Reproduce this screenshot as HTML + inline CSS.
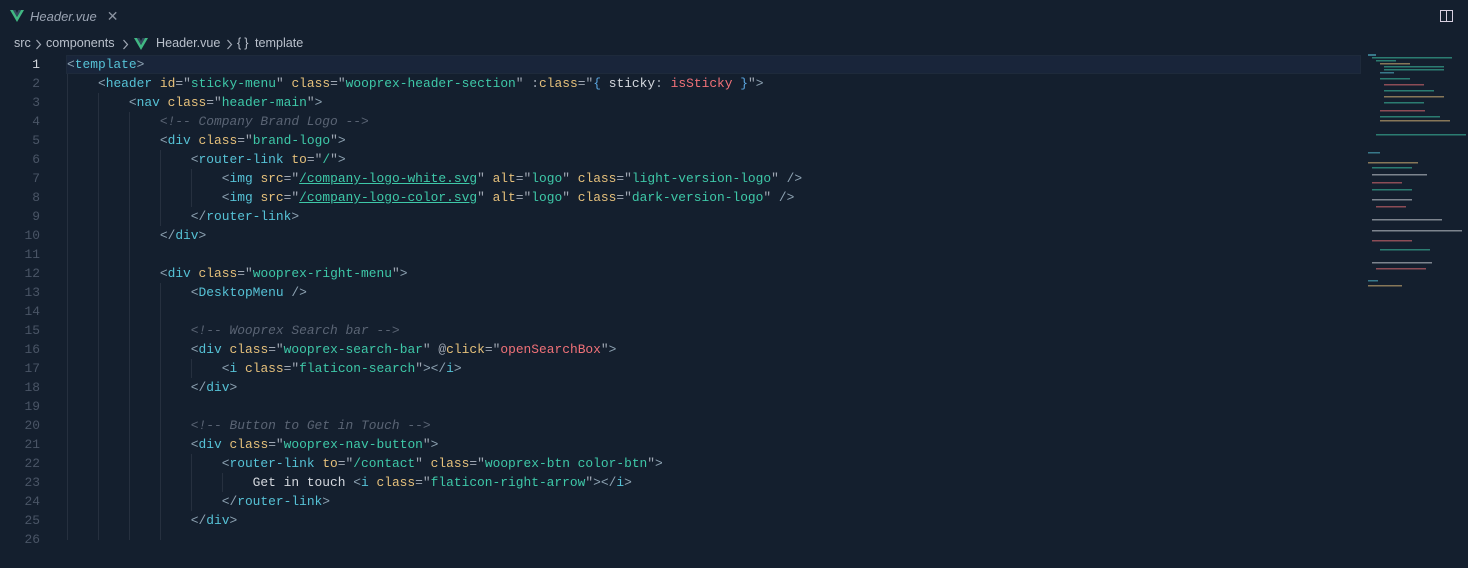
<!DOCTYPE html>
<html><head><meta charset="utf-8"><style>
*{margin:0;padding:0;box-sizing:border-box}
body{width:1468px;height:540px;overflow:hidden;background:#141f2e;font-family:"Liberation Sans",sans-serif;position:relative}
.tab{position:absolute;left:10px;top:6px;height:20px;display:flex;align-items:center;color:#9aa3b2;font-size:13px;font-style:italic}
.tab .x{font-style:normal;color:#8b93a0;margin-left:10px;font-size:14px}
.bc{position:absolute;top:36px;color:#b9c0cb;font-size:12.6px;white-space:pre}
.code{position:absolute;left:0;top:55px;font-family:"Liberation Mono",monospace;font-size:12.9px;line-height:19px;white-space:pre}
.ln{position:absolute;left:0;width:40px;text-align:right;color:#4a5566}
.ln.c{color:#d4d8de}
.tx{position:absolute;left:67px;color:#d4d8de}
.hl{position:absolute;left:66px;top:55px;width:1295px;height:19px;background:#19253a;border:1px solid #1e2a3b}
.g{position:absolute;width:1px;background:#26303f}
.b{color:#8ea3b3}.t{color:#56c2d6}.a{color:#e5c07b}.s{color:#3ec8a8}.q{color:#a0a8b4}.cm{color:#5a6474;font-style:italic}.p{color:#f07178}.u{text-decoration:underline;color:#3ec8a8}.w{color:#d4d8de}.br{color:#5aa6e0}
</style></head><body>
<div class="tab"><svg width="14" height="12" viewBox="0 0 14 12"><path d="M0 0h3l4 7 4-7h3L7 12z" fill="#41b883"/><path d="M3 0h2.5L7 3 8.5 0H11L7 7z" fill="#34495e"/></svg><span style="margin-left:6px">Header.vue</span><span class="x">✕</span></div>
<svg style="position:absolute;left:1440px;top:10px" width="13" height="12"><rect x="0.5" y="0.5" width="12" height="11" fill="none" stroke="#d8d0e0"/><line x1="6.5" y1="0" x2="6.5" y2="12" stroke="#d8d0e0"/></svg>
<div class="bc" style="left:14px">src</div>
<svg style="position:absolute;left:35px;top:39px" width="7" height="11"><path d="M1.5 1l4 4.5-4 4.5" fill="none" stroke="#a0a8b4" stroke-width="1.2"/></svg>
<div class="bc" style="left:46px">components</div>
<svg style="position:absolute;left:122px;top:39px" width="7" height="11"><path d="M1.5 1l4 4.5-4 4.5" fill="none" stroke="#a0a8b4" stroke-width="1.2"/></svg>
<svg style="position:absolute;left:134px;top:38px" width="14" height="12" viewBox="0 0 14 12"><path d="M0 0h3l4 7 4-7h3L7 12z" fill="#41b883"/><path d="M3 0h2.5L7 3 8.5 0H11L7 7z" fill="#34495e"/></svg>
<div class="bc" style="left:156px">Header.vue</div>
<svg style="position:absolute;left:226px;top:39px" width="7" height="11"><path d="M1.5 1l4 4.5-4 4.5" fill="none" stroke="#a0a8b4" stroke-width="1.2"/></svg>
<div class="bc" style="left:237px;letter-spacing:3px">{}</div>
<div class="bc" style="left:255px">template</div>
<div class="hl"></div>
<div class="g" style="left:67px;top:74px;height:466px"></div>
<div class="g" style="left:98px;top:93px;height:447px"></div>
<div class="g" style="left:129px;top:112px;height:428px"></div>
<div class="g" style="left:160px;top:150px;height:76px"></div>
<div class="g" style="left:191px;top:169px;height:38px"></div>
<div class="g" style="left:160px;top:283px;height:257px"></div>
<div class="g" style="left:191px;top:359px;height:19px"></div>
<div class="g" style="left:191px;top:454px;height:57px"></div>
<div class="g" style="left:222px;top:473px;height:19px"></div>
<div class="code">
<div class="ln c" style="top:0">1</div><div class="tx" style="top:0"><span class="b">&lt;</span><span class="t">template</span><span class="b">&gt;</span></div>
<div class="ln" style="top:19px">2</div><div class="tx" style="top:19px">    <span class="b">&lt;</span><span class="t">header</span> <span class="a">id</span><span class="q">="</span><span class="s">sticky-menu</span><span class="q">"</span> <span class="a">class</span><span class="q">="</span><span class="s">wooprex-header-section</span><span class="q">"</span> <span class="q">:</span><span class="a">class</span><span class="q">="</span><span class="br">{</span> <span class="w">sticky</span><span class="q">:</span> <span class="p">isSticky</span> <span class="br">}</span><span class="q">"</span><span class="b">&gt;</span></div>
<div class="ln" style="top:38px">3</div><div class="tx" style="top:38px">        <span class="b">&lt;</span><span class="t">nav</span> <span class="a">class</span><span class="q">="</span><span class="s">header-main</span><span class="q">"</span><span class="b">&gt;</span></div>
<div class="ln" style="top:57px">4</div><div class="tx" style="top:57px">            <span class="cm">&lt;!-- Company Brand Logo --&gt;</span></div>
<div class="ln" style="top:76px">5</div><div class="tx" style="top:76px">            <span class="b">&lt;</span><span class="t">div</span> <span class="a">class</span><span class="q">="</span><span class="s">brand-logo</span><span class="q">"</span><span class="b">&gt;</span></div>
<div class="ln" style="top:95px">6</div><div class="tx" style="top:95px">                <span class="b">&lt;</span><span class="t">router-link</span> <span class="a">to</span><span class="q">="</span><span class="s">/</span><span class="q">"</span><span class="b">&gt;</span></div>
<div class="ln" style="top:114px">7</div><div class="tx" style="top:114px">                    <span class="b">&lt;</span><span class="t">img</span> <span class="a">src</span><span class="q">="</span><span class="u">/company-logo-white.svg</span><span class="q">"</span> <span class="a">alt</span><span class="q">="</span><span class="s">logo</span><span class="q">"</span> <span class="a">class</span><span class="q">="</span><span class="s">light-version-logo</span><span class="q">"</span> <span class="b">/&gt;</span></div>
<div class="ln" style="top:133px">8</div><div class="tx" style="top:133px">                    <span class="b">&lt;</span><span class="t">img</span> <span class="a">src</span><span class="q">="</span><span class="u">/company-logo-color.svg</span><span class="q">"</span> <span class="a">alt</span><span class="q">="</span><span class="s">logo</span><span class="q">"</span> <span class="a">class</span><span class="q">="</span><span class="s">dark-version-logo</span><span class="q">"</span> <span class="b">/&gt;</span></div>
<div class="ln" style="top:152px">9</div><div class="tx" style="top:152px">                <span class="b">&lt;/</span><span class="t">router-link</span><span class="b">&gt;</span></div>
<div class="ln" style="top:171px">10</div><div class="tx" style="top:171px">            <span class="b">&lt;/</span><span class="t">div</span><span class="b">&gt;</span></div>
<div class="ln" style="top:190px">11</div>
<div class="ln" style="top:209px">12</div><div class="tx" style="top:209px">            <span class="b">&lt;</span><span class="t">div</span> <span class="a">class</span><span class="q">="</span><span class="s">wooprex-right-menu</span><span class="q">"</span><span class="b">&gt;</span></div>
<div class="ln" style="top:228px">13</div><div class="tx" style="top:228px">                <span class="b">&lt;</span><span class="t">DesktopMenu</span> <span class="b">/&gt;</span></div>
<div class="ln" style="top:247px">14</div>
<div class="ln" style="top:266px">15</div><div class="tx" style="top:266px">                <span class="cm">&lt;!-- Wooprex Search bar --&gt;</span></div>
<div class="ln" style="top:285px">16</div><div class="tx" style="top:285px">                <span class="b">&lt;</span><span class="t">div</span> <span class="a">class</span><span class="q">="</span><span class="s">wooprex-search-bar</span><span class="q">"</span> <span class="q">@</span><span class="a">click</span><span class="q">="</span><span class="p">openSearchBox</span><span class="q">"</span><span class="b">&gt;</span></div>
<div class="ln" style="top:304px">17</div><div class="tx" style="top:304px">                    <span class="b">&lt;</span><span class="t">i</span> <span class="a">class</span><span class="q">="</span><span class="s">flaticon-search</span><span class="q">"</span><span class="b">&gt;&lt;/</span><span class="t">i</span><span class="b">&gt;</span></div>
<div class="ln" style="top:323px">18</div><div class="tx" style="top:323px">                <span class="b">&lt;/</span><span class="t">div</span><span class="b">&gt;</span></div>
<div class="ln" style="top:342px">19</div>
<div class="ln" style="top:361px">20</div><div class="tx" style="top:361px">                <span class="cm">&lt;!-- Button to Get in Touch --&gt;</span></div>
<div class="ln" style="top:380px">21</div><div class="tx" style="top:380px">                <span class="b">&lt;</span><span class="t">div</span> <span class="a">class</span><span class="q">="</span><span class="s">wooprex-nav-button</span><span class="q">"</span><span class="b">&gt;</span></div>
<div class="ln" style="top:399px">22</div><div class="tx" style="top:399px">                    <span class="b">&lt;</span><span class="t">router-link</span> <span class="a">to</span><span class="q">="</span><span class="s">/contact</span><span class="q">"</span> <span class="a">class</span><span class="q">="</span><span class="s">wooprex-btn color-btn</span><span class="q">"</span><span class="b">&gt;</span></div>
<div class="ln" style="top:418px">23</div><div class="tx" style="top:418px">                        Get in touch <span class="b">&lt;</span><span class="t">i</span> <span class="a">class</span><span class="q">="</span><span class="s">flaticon-right-arrow</span><span class="q">"</span><span class="b">&gt;&lt;/</span><span class="t">i</span><span class="b">&gt;</span></div>
<div class="ln" style="top:437px">24</div><div class="tx" style="top:437px">                    <span class="b">&lt;/</span><span class="t">router-link</span><span class="b">&gt;</span></div>
<div class="ln" style="top:456px">25</div><div class="tx" style="top:456px">                <span class="b">&lt;/</span><span class="t">div</span><span class="b">&gt;</span></div>
<div class="ln" style="top:475px">26</div>
</div>
<svg style="position:absolute;left:1368px;top:54px" width="100" height="240">
<g opacity="0.55">
<rect x="0" y="0" width="8" height="2" fill="#56c2d6"/>
<rect x="4" y="3" width="80" height="1.5" fill="#3ec8a8"/>
<rect x="8" y="6" width="20" height="1.5" fill="#3ec8a8"/>
<rect x="12" y="9" width="30" height="1.5" fill="#e5c07b"/>
<rect x="16" y="12" width="60" height="1.5" fill="#3ec8a8"/>
<rect x="16" y="15" width="60" height="1.5" fill="#3ec8a8"/>
<rect x="12" y="18" width="14" height="1.5" fill="#56c2d6"/>
<rect x="12" y="24" width="30" height="1.5" fill="#3ec8a8"/>
<rect x="16" y="30" width="40" height="1.5" fill="#f07178"/>
<rect x="16" y="36" width="50" height="1.5" fill="#3ec8a8"/>
<rect x="16" y="42" width="60" height="1.5" fill="#e5c07b"/>
<rect x="16" y="48" width="40" height="1.5" fill="#3ec8a8"/>
<rect x="12" y="56" width="45" height="1.5" fill="#f07178"/>
<rect x="12" y="62" width="60" height="1.5" fill="#3ec8a8"/>
<rect x="12" y="66" width="70" height="1.5" fill="#e5c07b"/>
<rect x="8" y="80" width="90" height="1.5" fill="#3ec8a8"/>
<rect x="0" y="98" width="12" height="1.5" fill="#56c2d6"/>
<rect x="0" y="108" width="50" height="1.5" fill="#e5c07b"/>
<rect x="4" y="113" width="40" height="1.5" fill="#3ec8a8"/>
<rect x="4" y="120" width="55" height="1.5" fill="#d4d8de"/>
<rect x="4" y="128" width="30" height="1.5" fill="#f07178"/>
<rect x="4" y="135" width="40" height="1.5" fill="#3ec8a8"/>
<rect x="4" y="145" width="40" height="1.5" fill="#d4d8de"/>
<rect x="8" y="152" width="30" height="1.5" fill="#f07178"/>
<rect x="4" y="165" width="70" height="1.5" fill="#d4d8de"/>
<rect x="4" y="176" width="90" height="1.5" fill="#d4d8de"/>
<rect x="4" y="186" width="40" height="1.5" fill="#f07178"/>
<rect x="12" y="195" width="50" height="1.5" fill="#3ec8a8"/>
<rect x="4" y="208" width="60" height="1.5" fill="#d4d8de"/>
<rect x="8" y="214" width="50" height="1.5" fill="#f07178"/>
<rect x="0" y="226" width="10" height="1.5" fill="#56c2d6"/>
<rect x="0" y="231" width="34" height="1.5" fill="#e5c07b"/>
</g></svg>
</body></html>
